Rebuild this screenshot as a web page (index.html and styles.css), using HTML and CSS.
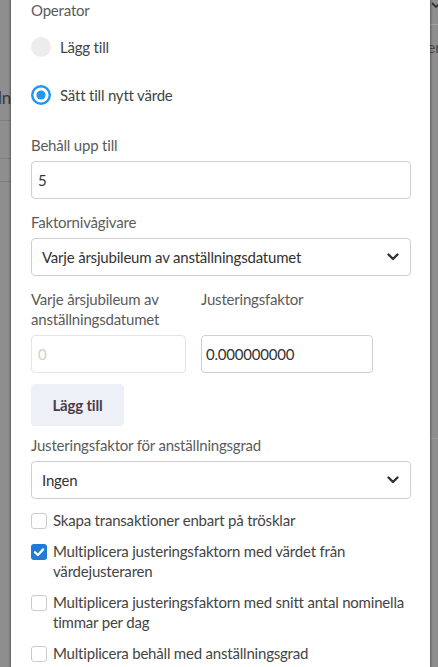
FILE: index.html
```html
<!DOCTYPE html>
<html lang="sv">
<head>
<meta charset="utf-8">
<title>Justering</title>
<link rel="stylesheet" href="styles.css">
</head>
<body>
<div class="screen">
  <div class="backdrop backdrop-left">
    <div class="bg-row bg-row-1"><span class="bg-text">Anställn</span></div>
    <div class="bg-row bg-row-2"></div>
    <div class="bg-row bg-row-3"></div>
  </div>

  <main class="panel">
    <section class="field">
      <div class="label">Operator</div>
      <div class="radio-group">
        <label class="radio"><span class="radio-off"></span><span>Lägg till</span></label>
        <label class="radio"><svg class="radio-on" width="20" height="20" viewBox="0 0 20 20"><circle cx="10" cy="10" r="8.8" fill="none" stroke="#2196f3" stroke-width="2.4"/><circle cx="10" cy="10" r="4.6" fill="#2196f3"/></svg><span>Sätt till nytt värde</span></label>
      </div>
    </section>

    <section class="field field-keep">
      <div class="label">Behåll upp till</div>
      <div class="input">5</div>
    </section>

    <section class="field field-gap">
      <div class="label">Faktornivågivare</div>
      <div class="select">
        <span>Varje årsjubileum av anställningsdatumet</span>
        <svg class="chev" width="12" height="8" viewBox="0 0 12 8"><path d="M1.5 1.5 L6 6 L10.5 1.5" fill="none" stroke="#333" stroke-width="2.4" stroke-linecap="round" stroke-linejoin="round"/></svg>
      </div>
    </section>

    <section class="pair">
      <div class="label">Varje årsjubileum av anställningsdatumet</div>
      <div class="label label-right">Justeringsfaktor</div>
      <div class="input input-disabled">0</div>
      <div class="input input-right">0.000000000</div>
    </section>

    <button class="btn" type="button">Lägg till</button>

    <section class="field field-grade">
      <div class="label">Justeringsfaktor för anställningsgrad</div>
      <div class="select">
        <span>Ingen</span>
        <svg class="chev" width="12" height="8" viewBox="0 0 12 8"><path d="M1.5 1.5 L6 6 L10.5 1.5" fill="none" stroke="#333" stroke-width="2.4" stroke-linecap="round" stroke-linejoin="round"/></svg>
      </div>
    </section>

    <section class="checks">
      <label class="check"><span class="box"></span><span class="check-text">Skapa transaktioner enbart på trösklar</span></label>
      <label class="check"><span class="box box-on"><svg width="16" height="16" viewBox="0 0 16 16"><path d="M4 8.3 L6.9 11 L12.2 5.4" fill="none" stroke="#fff" stroke-width="2.3" stroke-linecap="round" stroke-linejoin="round"/></svg></span><span class="check-text">Multiplicera justeringsfaktorn med värdet från värdejusteraren</span></label>
      <label class="check"><span class="box"></span><span class="check-text">Multiplicera justeringsfaktorn med snitt antal nominella timmar per dag</span></label>
      <label class="check"><span class="box"></span><span class="check-text">Multiplicera behåll med anställningsgrad</span></label>
    </section>
  </main>

  <div class="backdrop backdrop-right">
    <div class="bg-head"><svg width="10" height="8" viewBox="0 0 10 8"><path d="M1 2 L5 6 L9 2" fill="none" stroke="#333" stroke-width="1.8"/></svg></div>
    <div class="bg-word">er</div>
    <div class="bg-tail"></div>
  </div>
</div>
</body>
</html>
```

FILE: styles.css
```css
* { box-sizing: border-box; }

html, body {
  margin: 0;
  padding: 0;
  height: 667px;
  overflow: hidden;
}

body {
  background: #8e8e8e;
  font-family: Lato, "Liberation Sans", sans-serif;
  font-size: 15px;
  line-height: 20px;
  letter-spacing: -0.2px;
  color: #444;
}

.screen {
  display: flex;
  height: 667px;
}

/* backdrop page (dimmed) */
.backdrop {
  background: #8e8e8e;
  overflow: hidden;
  flex: none;
}

.backdrop-left {
  width: 11px;
  display: flex;
  flex-direction: column;
}

.bg-row {
  border-bottom: 1px solid #7f7f7f;
  display: flex;
  justify-content: flex-end;
}

.bg-row-1 { height: 121px; padding-top: 88px; }
.bg-row-2 { height: 38px; }
.bg-row-3 { height: 23px; }

.bg-text {
  white-space: nowrap;
  font-size: 17px;
  color: #3a3a3a;
}

.backdrop-right {
  width: 8px;
  display: flex;
  flex-direction: column;
}

.bg-head {
  height: 25px;
  border-bottom: 1px solid #a2a2a2;
  padding-left: 1px;
  padding-top: 1px;
}

.bg-head svg { display: block; }

.bg-word {
  margin-top: 12px;
  margin-left: -3px;
  font-size: 16px;
  color: #4a4a4a;
  white-space: nowrap;
}

.bg-tail {
  height: 382px;
  border-bottom: 1px solid #9a9a9a;
}

/* panel */
.panel {
  width: 419px;
  flex: none;
  background: #fff;
  padding: 0 19px 0 20px;
  display: flex;
  flex-direction: column;
  box-shadow: 0 0 2px 1px rgba(0, 0, 0, 0.35);
  position: relative;
  z-index: 1;
}

.label {
  color: #5b5b5b;
  line-height: 20px;
}

.field {
  display: flex;
  flex-direction: column;
  gap: 6px;
}

.field-keep { margin-top: 30px; }
.field-gap { margin-top: 13px; }
.field-grade { margin-top: 9px; }

.radio-group {
  margin-top: 11px;
  display: flex;
  flex-direction: column;
  gap: 28px;
}

.radio {
  display: flex;
  align-items: center;
  gap: 9px;
  height: 20px;
  color: #444;
}

.radio-off {
  width: 20px;
  height: 20px;
  border-radius: 50%;
  background: #ececec;
  flex: none;
}

.radio-on { flex: none; display: block; }

.input {
  height: 38px;
  border: 1px solid #cfcfcf;
  border-radius: 4px;
  padding: 0 6px;
  display: flex;
  align-items: center;
  color: #333;
}

.input-disabled {
  border-color: #e4e4e4;
  color: #cfcfcf;
}

.input-right { padding-left: 4px; }

.select {
  height: 38px;
  border: 1px solid #cfcfcf;
  border-radius: 4px;
  padding: 0 11px 0 10px;
  display: flex;
  align-items: center;
  justify-content: space-between;
  color: #333;
}

.chev { display: block; flex: none; }

.pair {
  margin-top: 13px;
  display: grid;
  grid-template-columns: 155px 172px;
  column-gap: 15px;
  row-gap: 6px;
  align-items: end;
}

.pair .label { align-self: start; }

.btn {
  margin-top: 11px;
  align-self: flex-start;
  width: 93px;
  height: 42px;
  border: none;
  border-radius: 4px;
  background: #eef0f8;
  font-family: inherit;
  font-size: 15px;
  font-weight: 700;
  letter-spacing: -0.2px;
  color: #4b3c46;
  padding: 0;
}

.checks {
  margin-top: 11px;
  display: flex;
  flex-direction: column;
  gap: 11px;
}

.check {
  display: flex;
  align-items: flex-start;
  gap: 6px;
  color: #444;
  line-height: 20px;
}

.box {
  flex: none;
  width: 16px;
  height: 16px;
  margin-top: 3px;
  border: 1px solid #cbcbcb;
  border-radius: 3px;
  background: #fff;
}

.box-on {
  border: none;
  background: #1f7bd6;
}

.box-on svg { display: block; }
```
